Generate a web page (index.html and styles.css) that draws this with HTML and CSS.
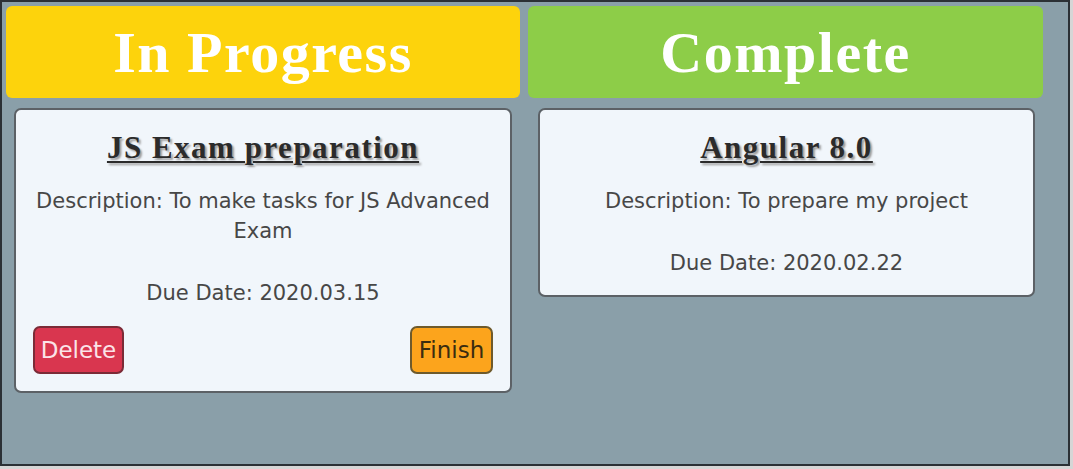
FILE: index.html
```html
<!DOCTYPE html>
<html>
<head>
<meta charset="utf-8">
<link rel="stylesheet" href="styles.css">
</head>
<body>
<main class="board">
  <section class="column">
    <h1 class="col-head in-progress">In Progress</h1>
    <article class="card">
      <h3 class="card-title">JS Exam preparation</h3>
      <p class="card-text">Description: To make tasks for JS Advanced Exam</p>
      <p class="card-text">Due Date: 2020.03.15</p>
      <div class="actions">
        <button class="btn btn-delete">Delete</button>
        <button class="btn btn-finish">Finish</button>
      </div>
    </article>
  </section>
  <section class="column">
    <h1 class="col-head complete">Complete</h1>
    <article class="card">
      <h3 class="card-title">Angular 8.0</h3>
      <p class="card-text">Description: To prepare my project</p>
      <p class="card-text">Due Date: 2020.02.22</p>
    </article>
  </section>
</main>
</body>
</html>
```
FILE: styles.css
```css
html, body {
  margin: 0;
  padding: 0;
  background: #d6d6d6;
}
.board {
  box-sizing: border-box;
  width: 1070px;
  height: 466px;
  border: 2px solid #2b3035;
  background: #8a9fa9;
  display: grid;
  grid-template-columns: 514px 515px;
  column-gap: 8px;
  align-items: start;
  padding: 4px 0 0 4px;
}
.column {
  display: flex;
  flex-direction: column;
}
.col-head {
  margin: 0;
  height: 92px;
  border-radius: 6px;
  display: flex;
  align-items: center;
  justify-content: center;
  font-family: "Liberation Serif", "DejaVu Serif", serif;
  font-weight: bold;
  font-size: 58px;
  letter-spacing: 1.5px;
  color: #ffffff;
}
.in-progress { background: #fdd30c; }
.complete { background: #8dcd48; }
.card {
  margin: 10px 8px 0 8px;
  background: #f1f6fb;
  border: 2px solid #5c6166;
  border-radius: 7px;
  padding: 20px 16px 17px;
  text-align: center;
}
.column + .column .card {
  margin-left: 10px;
}
.card-title {
  margin: 0 0 20px;
  font-family: "Liberation Serif", "DejaVu Serif", serif;
  font-weight: bold;
  font-size: 31px;
  letter-spacing: 1.5px;
  line-height: 36px;
  color: #2b2b2b;
  text-decoration: underline;
  text-decoration-thickness: 2px;
  text-underline-offset: 3px;
  text-shadow: 2px 2px 2px #9a9a9a;
}
.card-text {
  margin: 0 0 32px;
  font-family: "DejaVu Sans", Verdana, sans-serif;
  font-size: 21px;
  line-height: 30px;
  color: #474747;
}
.card-text:last-child {
  margin-bottom: 0;
}
.actions {
  display: flex;
  justify-content: space-between;
  margin-top: -14px;
  padding: 0 1px;
}
.btn {
  height: 48px;
  border: 2px solid #6d3a3a;
  border-radius: 7px;
  font-family: "DejaVu Sans", Verdana, sans-serif;
  font-size: 23px;
  padding: 0 4px;
}
.btn-delete {
  width: 91px;
  background: #d9364f;
  color: #fbe3e8;
  border-color: #7b2b37;
}
.btn-finish {
  width: 83px;
  background: #fca41c;
  color: #3a2c10;
  border-color: #6e5a2c;
}
```
